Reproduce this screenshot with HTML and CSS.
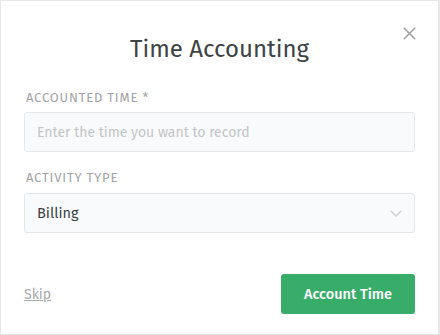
FILE: index.html
```html
<!DOCTYPE html>
<html>
<head>
<meta charset="utf-8">
<link rel="stylesheet" href="styles.css">
</head>
<body>
<div class="modal">
  <button class="close" aria-label="Close">
    <svg width="13" height="13" viewBox="0 0 13 13"><path d="M0.8 0.8 L12.2 12.2 M12.2 0.8 L0.8 12.2" stroke="#a3a3a3" stroke-width="1.6" fill="none"/></svg>
  </button>
  <h1 class="title">Time Accounting</h1>
  <form class="form">
    <div class="field">
      <label class="label">Accounted Time *</label>
      <div class="control"><span class="placeholder">Enter the time you want to record</span></div>
    </div>
    <div class="field field-second">
      <label class="label">Activity Type</label>
      <div class="control select">
        <span class="value">Billing</span>
        <svg class="chevron" width="12" height="7" viewBox="0 0 12 7"><path d="M1 1 L6 6 L11 1" stroke="#cfd2d4" stroke-width="1.5" fill="none"/></svg>
      </div>
    </div>
  </form>
  <div class="footer">
    <a class="skip" href="#">Skip</a>
    <button class="primary">Account Time</button>
  </div>
</div>
</body>
</html>
```
FILE: styles.css
```css
html, body { margin: 0; padding: 0; background: #fff; }
.modal {
  position: relative;
  width: 440px;
  height: 335px;
  box-sizing: border-box;
  border: 1px solid #e8e8e8;
  border-right-width: 2px;
  padding: 0 23px;
  font-family: "Fira Sans", "Open Sans", sans-serif;
}
.close {
  position: absolute;
  top: 26px;
  right: 22px;
  border: 0;
  background: none;
  padding: 0;
  width: 13px;
  height: 13px;
  line-height: 0;
}
.title {
  margin: 33px 0 0;
  font-size: 24px;
  line-height: 30px;
  font-weight: 400;
  color: #3e4347;
  text-align: center;
}
.form { margin-top: 26px; }
.label {
  display: block;
  font-size: 13px;
  line-height: 16px;
  letter-spacing: 0.8px;
  text-transform: uppercase;
  color: #a2a4a6;
  padding-left: 2px;
}
.control {
  margin-top: 6px;
  height: 40px;
  box-sizing: border-box;
  border: 1px solid #e5e7e9;
  border-radius: 3px;
  background: #f9fafb;
  display: flex;
  align-items: center;
  padding: 0 12px;
}
.placeholder { font-size: 14px; color: #c3c5c7; }
.field-second { margin-top: 18px; }
.field-second .control { margin-top: 7px; }
.select { justify-content: space-between; padding-right: 12px; }
.value { font-size: 14.5px; font-weight: 400; color: #3a3f43; }
.footer {
  margin-top: 41px;
  display: flex;
  justify-content: space-between;
  align-items: center;
}
.skip {
  font-size: 14px;
  color: #a8aaac;
  text-decoration: underline;
}
.primary {
  width: 134px;
  height: 40px;
  border: 0;
  border-radius: 3px;
  background: #38ad69;
  color: #fff;
  font-family: "Fira Sans", "Open Sans", sans-serif;
  font-size: 14.5px;
  font-weight: 500;
}
```
